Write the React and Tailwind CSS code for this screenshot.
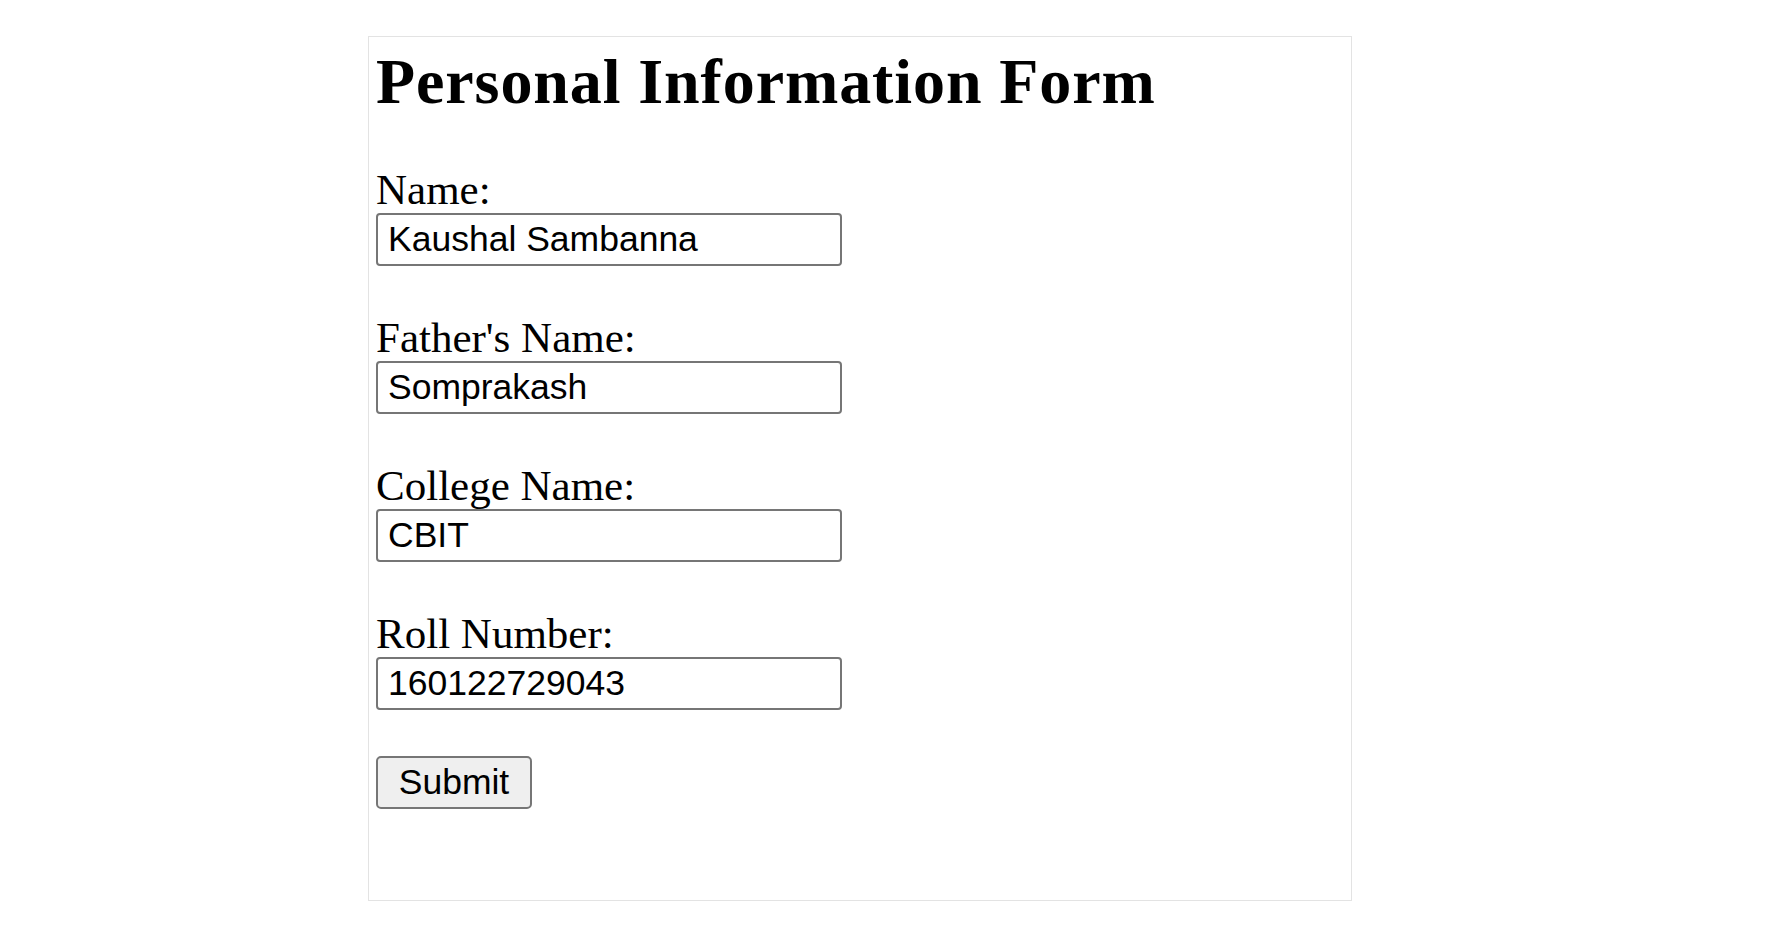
import React, { useState } from 'react';

const fields = [
    { id: 'name', label: 'Name:', value: 'Kaushal Sambanna' },
    { id: 'father', label: "Father's Name:", value: 'Somprakash' },
    { id: 'college', label: 'College Name:', value: 'CBIT' },
    { id: 'roll', label: 'Roll Number:', value: '160122729043' },
];

export default function App() {
    const [values, setValues] = useState(
        Object.fromEntries(fields.map(f => [f.id, f.value]))
    );

    const handleChange = (id, v) => {
        setValues(prev => ({ ...prev, [id]: v }));
    };

    return (
        <div className="min-h-screen bg-white pt-[36px] pl-[368px]">
            <div className="w-[984px] h-[865px] border border-[#e3e3e3] px-[7px] pt-[10px]" style={{ fontFamily: '"Liberation Serif", "Times New Roman", serif' }}>
                <h1 className="text-[64px] font-bold leading-[69px] tracking-[0.9px] text-black">Personal Information Form</h1>

                <form className="mt-[51px]" onSubmit={e => e.preventDefault()}>
                    {fields.map(field => (
                        <div key={field.id} className="mb-[49px]">
                            <label htmlFor={field.id} className="block text-[43px] leading-[45px] text-black">
                                {field.label}
                            </label>
                            <input
                                id={field.id}
                                type="text"
                                value={values[field.id]}
                                onChange={e => handleChange(field.id, e.target.value)}
                                className="mt-[1px] block w-[466px] h-[53px] rounded-[4px] border-2 border-[#767676] bg-white px-[10px] text-[35.5px] leading-none text-black outline-none"
                                style={{ fontFamily: '"Liberation Sans", Arial, sans-serif' }}
                            />
                        </div>
                    ))}
                    <button
                        type="submit"
                        className="-mt-[3px] block w-[156px] h-[53px] rounded-[5px] border-2 border-[#767676] bg-[#efefef] text-[35.5px] leading-none text-black"
                        style={{ fontFamily: '"Liberation Sans", Arial, sans-serif' }}
                    >
                        Submit
                    </button>
                </form>
            </div>
        </div>
    );
}
